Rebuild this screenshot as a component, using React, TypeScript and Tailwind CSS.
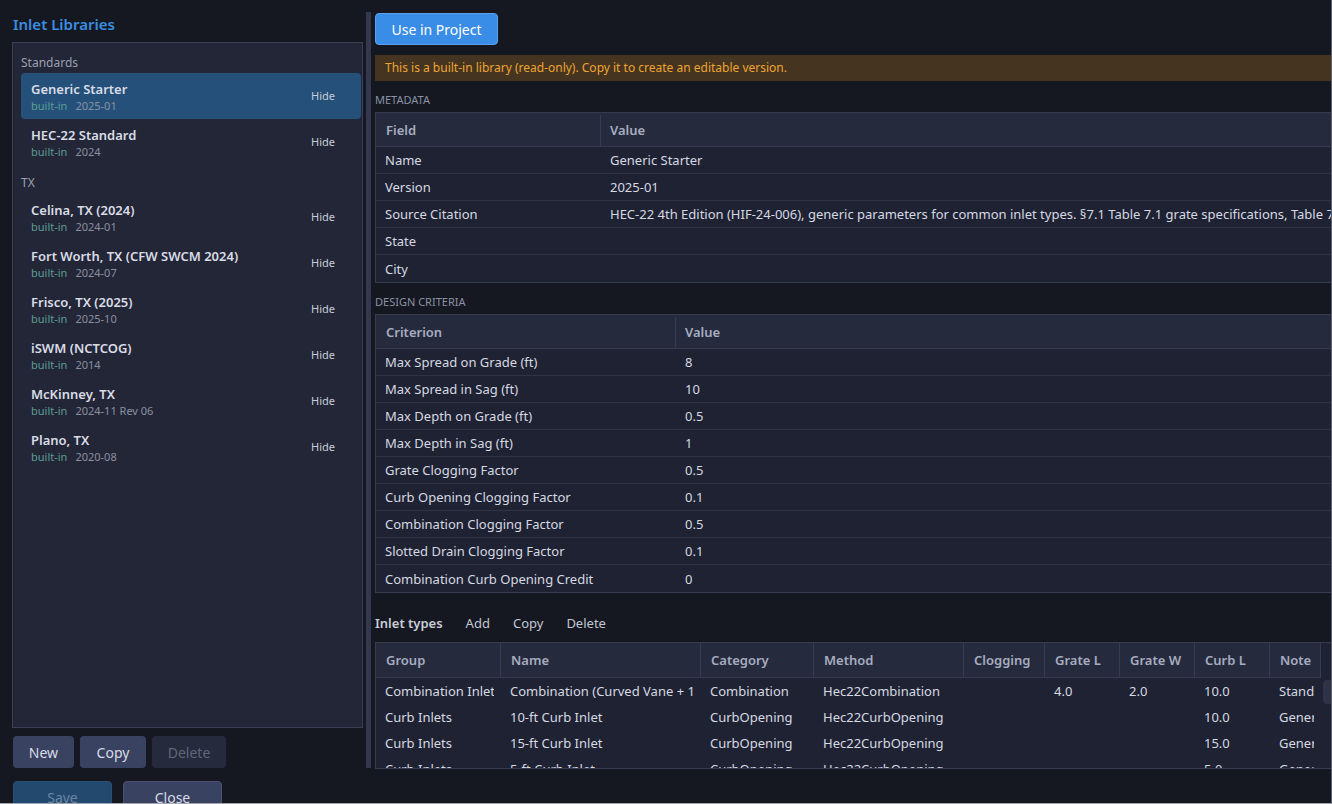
import React from "react";

const FONT = { fontFamily: '"Noto Sans", "Open Sans", sans-serif' };

type Lib = { name: string; date: string; selected?: boolean };

const standards: Lib[] = [
  { name: "Generic Starter", date: "2025-01", selected: true },
  { name: "HEC-22 Standard", date: "2024" },
];
const tx: Lib[] = [
  { name: "Celina, TX (2024)", date: "2024-01" },
  { name: "Fort Worth, TX (CFW SWCM 2024)", date: "2024-07" },
  { name: "Frisco, TX (2025)", date: "2025-10" },
  { name: "iSWM (NCTCOG)", date: "2014" },
  { name: "McKinney, TX", date: "2024-11 Rev 06" },
  { name: "Plano, TX", date: "2020-08" },
];

function LibItem({ lib }: { lib: Lib }) {
  return (
    <div
      className={`flex h-[46px] items-center rounded-[4px] pl-[10px] pr-[26px] ${
        lib.selected ? "bg-[#24507a]" : ""
      }`}
    >
      <div className="flex flex-1 flex-col">
        <div className="text-[13px] leading-[18px] font-semibold text-[#d9dce5]">{lib.name}</div>
        <div className="flex gap-[8px] text-[11px] leading-[15px]">
          <span className="text-[#5b9e93]">built-in</span>
          <span className="text-[#8a90a0]">{lib.date}</span>
        </div>
      </div>
      <div className="text-[11px] text-[#c9cdd8]">Hide</div>
    </div>
  );
}

function SectionLabel({ children }: { children: React.ReactNode }) {
  return <div className="text-[11px] leading-[14px] uppercase text-[#8b91a3]">{children}</div>;
}

function KVTable({
  headers,
  col1,
  rows,
}: {
  headers: [string, string];
  col1: number;
  rows: [string, string][];
}) {
  return (
    <div className="w-[1000px] border border-[#363b51] bg-[#1f2232]">
      <div className="flex h-[34px] items-center border-b border-[#363b51] bg-[#262a3d] pt-[2px] text-[13px] font-semibold text-[#a6adc0]">
        <div
          className="flex h-full items-center border-r border-[#363b51] pl-[10px]"
          style={{ width: col1 }}
        >
          {headers[0]}
        </div>
        <div className="pl-[9px]">{headers[1]}</div>
      </div>
      {rows.map((r, i) => (
        <div
          key={i}
          className={`flex h-[27px] items-center pt-[2px] text-[13px] text-[#d6d9e2] ${
            i < rows.length - 1 ? "border-b border-[#2f3446]" : ""
          }`}
        >
          <div className="shrink-0 pl-[9px]" style={{ width: col1 }}>
            {r[0]}
          </div>
          <div className="whitespace-nowrap pl-[9px]">{r[1]}</div>
        </div>
      ))}
    </div>
  );
}

const inletCols: { label: string; w: number }[] = [
  { label: "Group", w: 125 },
  { label: "Name", w: 200 },
  { label: "Category", w: 113 },
  { label: "Method", w: 150 },
  { label: "Clogging", w: 81 },
  { label: "Grate L", w: 75 },
  { label: "Grate W", w: 75 },
  { label: "Curb L", w: 75 },
  { label: "Note", w: 51 },
];

const inletRows: string[][] = [
  ["Combination Inlet", "Combination (Curved Vane + 10-ft Curb)", "Combination", "Hec22Combination", "", "4.0", "2.0", "10.0", "Standard"],
  ["Curb Inlets", "10-ft Curb Inlet", "CurbOpening", "Hec22CurbOpening", "", "", "", "10.0", "Generic"],
  ["Curb Inlets", "15-ft Curb Inlet", "CurbOpening", "Hec22CurbOpening", "", "", "", "15.0", "Generic"],
  ["Curb Inlets", "5-ft Curb Inlet", "CurbOpening", "Hec22CurbOpening", "", "", "", "5.0", "Generic"],
];

export default function App() {
  return (
    <div
      className="flex h-[804px] w-[1332px] overflow-hidden border-r border-b border-r-[#5d616f] border-b-[#a3a6ad] bg-[#151821]"
      style={FONT}
    >
      {/* Left column */}
      <div className="flex w-[366px] shrink-0 flex-col pl-[12px] pr-[3px] pt-[12px]">
        <div className="h-[24px] shrink-0 pl-[1px] text-[15px] leading-[24px] font-semibold text-[#3a8ee0]">
          Inlet Libraries
        </div>
        <div className="mt-[6px] flex h-[686px] shrink-0 flex-col border border-[#3a3f56] bg-[#232637] pl-[7px] pr-[1px] pt-[12px]">
          <div className="h-[16px] pl-[1px] text-[12px] leading-[16px] text-[#9aa0b0]">Standards</div>
          <div className="mt-[2px] pl-[1px]">
            {standards.map((l) => (
              <LibItem key={l.name} lib={l} />
            ))}
          </div>
          <div className="mt-[10px] h-[16px] pl-[1px] text-[12px] leading-[16px] text-[#9aa0b0]">TX</div>
          <div className="mt-[3px] pl-[1px]">
            {tx.map((l) => (
              <LibItem key={l.name} lib={l} />
            ))}
          </div>
        </div>
        <div className="mt-[8px] flex h-[32px] shrink-0 gap-[6px] pl-[1px] text-[14px]">
          <button className="w-[61px] rounded-[4px] bg-[#3a4262] text-[#d8dce6]">New</button>
          <button className="w-[66px] rounded-[4px] bg-[#3a4262] text-[#d8dce6]">Copy</button>
          <button className="w-[74px] rounded-[4px] bg-[#252a3c] text-[#61677a]">Delete</button>
        </div>
        <div className="mt-[13px] flex h-[32px] shrink-0 gap-[11px] pl-[1px] text-[14px]">
          <button className="w-[99px] rounded-[4px] border border-[#2a4f75] bg-[#23496f] text-[#6d86a3]">
            Save
          </button>
          <button className="w-[99px] rounded-[4px] border border-[#4a5272] bg-[#3a4262] text-[#d8dce6]">
            Close
          </button>
        </div>
      </div>

      {/* Splitter */}
      <div className="mt-[12px] h-[756px] w-[5px] shrink-0 bg-[#33384e]" />

      {/* Right column */}
      <div className="flex min-w-0 flex-1 flex-col pl-[4px] pt-[13px]">
        <div className="shrink-0">
          <button className="h-[32px] w-[123px] rounded-[4px] border border-[#5aa2ee] bg-[#3a8de6] text-[14px] text-white">
            Use in Project
          </button>
        </div>
        <div className="mt-[10px] flex h-[26px] w-[1000px] shrink-0 items-center bg-[#453520] pl-[10px] text-[12px] text-[#eea431]">
          This is a built-in library (read-only). Copy it to create an editable version.
        </div>
        <div className="mt-[12px] h-[14px] shrink-0">
          <SectionLabel>Metadata</SectionLabel>
        </div>
        <div className="mt-[5px] shrink-0">
          <KVTable
            headers={["Field", "Value"]}
            col1={225}
            rows={[
              ["Name", "Generic Starter"],
              ["Version", "2025-01"],
              [
                "Source Citation",
                "HEC-22 4th Edition (HIF-24-006), generic parameters for common inlet types. §7.1 Table 7.1 grate specifications, Table 7.2 curb opening",
              ],
              ["State", ""],
              ["City", ""],
            ]}
          />
        </div>
        <div className="mt-[12px] h-[14px] shrink-0">
          <SectionLabel>Design Criteria</SectionLabel>
        </div>
        <div className="mt-[5px] shrink-0">
          <KVTable
            headers={["Criterion", "Value"]}
            col1={300}
            rows={[
              ["Max Spread on Grade (ft)", "8"],
              ["Max Spread in Sag (ft)", "10"],
              ["Max Depth on Grade (ft)", "0.5"],
              ["Max Depth in Sag (ft)", "1"],
              ["Grate Clogging Factor", "0.5"],
              ["Curb Opening Clogging Factor", "0.1"],
              ["Combination Clogging Factor", "0.5"],
              ["Slotted Drain Clogging Factor", "0.1"],
              ["Combination Curb Opening Credit", "0"],
            ]}
          />
        </div>
        <div className="mt-[21px] flex h-[20px] shrink-0 items-center text-[13px]">
          <span className="font-semibold text-[#c9cdd8]">Inlet types</span>
          <span className="ml-[23px] text-[#c2c7d2]">Add</span>
          <span className="ml-[23px] text-[#c2c7d2]">Copy</span>
          <span className="ml-[23px] text-[#c2c7d2]">Delete</span>
        </div>
        <div className="relative mt-[8px] h-[127px] w-[1000px] shrink-0 overflow-hidden border border-[#363b51] bg-[#1f2232]">
          <div className="flex h-[35px] items-center text-[13px] font-semibold text-[#a6adc0]">
            {inletCols.map((c) => (
              <div
                key={c.label}
                className="flex h-full shrink-0 items-center overflow-hidden whitespace-nowrap border-r border-b border-[#363b51] bg-[#262a3d] pl-[10px] pt-[1px]"
                style={{ width: c.w }}
              >
                {c.label}
              </div>
            ))}
          </div>
          {inletRows.map((r, i) => (
            <div key={i} className="flex h-[26px] items-center pt-[2px] text-[13px] text-[#d6d9e2]">
              {r.map((v, j) => (
                <div
                  key={j}
                  className="shrink-0 overflow-hidden whitespace-nowrap pl-[9px] pr-[7px]"
                  style={{ width: inletCols[j].w }}
                >
                  <div className="overflow-hidden">{v}</div>
                </div>
              ))}
            </div>
          ))}
          <div className="absolute left-[947px] top-[37px] h-[24px] w-[12px] rounded-[4px] bg-[#2e3347]" />
        </div>
      </div>
    </div>
  );
}
